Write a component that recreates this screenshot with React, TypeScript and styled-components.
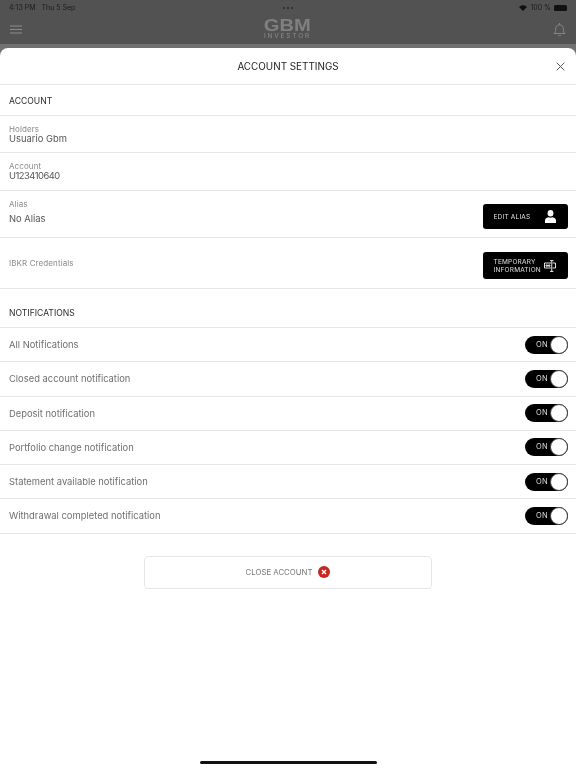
import React from 'react';
import styled, { createGlobalStyle } from 'styled-components';

const GlobalStyle = createGlobalStyle`
	html, body {
		margin: 0;
		padding: 0;
		background: #fff;
	}
	* {
		box-sizing: border-box;
	}
`;

const Page = styled.div`
	position: relative;
	width: 576px;
	height: 768px;
	overflow: hidden;
	background: #717171;
	font-family: Inter, "Liberation Sans", sans-serif;
	-webkit-font-smoothing: antialiased;
	display: flex;
	flex-direction: column;
`;

const TopArea = styled.div`
	height: 44px;
	flex: none;
	background: #525252;
	border-radius: 0.01px;
	will-change: transform;
	display: flex;
	flex-direction: column;
`;

const StatusBar = styled.div`
	height: 14px;
	padding: 1px 9px 0;
	display: grid;
	grid-template-columns: 1fr auto 1fr;
	align-items: center;
	font-size: 7px;
	color: #1c1c1c;
`;

const StatusLeft = styled.div`
	display: flex;
	gap: 6px;
`;

const Dots = styled.div`
	display: flex;
	gap: 2px;
`;

const Dot = styled.span`
	width: 2px;
	height: 2px;
	border-radius: 50%;
	background: #2a2a2a;
`;

const StatusRight = styled.div`
	display: flex;
	justify-content: flex-end;
	align-items: center;
	gap: 3px;
`;

const Battery = styled.span`
	width: 13px;
	height: 6px;
	border-radius: 1.5px;
	background: #111;
`;

const NavBar = styled.div`
	flex: 1;
	padding: 0 10px;
	display: flex;
	align-items: center;
	justify-content: space-between;
`;

const Logo = styled.div`
	display: flex;
	flex-direction: column;
	align-items: center;
	color: #808080;
`;

const LogoMain = styled.span`
	font-family: "Liberation Sans", sans-serif;
	font-size: 16.5px;
	line-height: 14px;
	font-weight: 700;
	transform: scaleX(1.22);
`;

const LogoSub = styled.span`
	font-size: 6.5px;
	line-height: 8px;
	letter-spacing: 1.85px;
	color: #8c8c8c;
`;

const Sheet = styled.div`
	margin-top: 4px;
	flex: 1;
	background: #fff;
	border-radius: 8px 8px 0 0;
	will-change: transform;
	display: flex;
	flex-direction: column;
`;

const TitleRow = styled.div`
	position: relative;
	height: 37px;
	flex: none;
	display: flex;
	align-items: center;
	justify-content: center;
	border-bottom: 1px solid #e6e6e6;
	font-size: 9.9px;
	color: #222;
`;

const CloseButton = styled.span`
	position: absolute;
	right: 11px;
	top: 14px;
	display: flex;
	color: #555;
`;

const SectionHeader = styled.div<{ $height: number; $offset: number }>`
	height: ${(props) => props.$height}px;
	flex: none;
	padding: ${(props) => props.$offset}px 9px 0;
	display: flex;
	align-items: center;
	border-bottom: 1px solid #e6e6e6;
	font-size: 8.6px;
	color: #2a2a2a;
`;

const InfoRow = styled.div<{ $height: number; $textLift?: number }>`
	height: ${(props) => props.$height}px;
	flex: none;
	padding: 0 8px ${(props) => props.$textLift || 0}px 9px;
	display: flex;
	align-items: center;
	justify-content: space-between;
	border-bottom: 1px solid #e6e6e6;
`;

const InfoText = styled.div<{ $gap?: number }>`
	display: flex;
	flex-direction: column;
	gap: ${(props) => props.$gap || 0}px;
`;

const InfoLabel = styled.span`
	font-size: 8px;
	line-height: 10px;
	color: #8a8a8a;
	letter-spacing: 0.1px;
`;

const InfoValue = styled.span<{ $digits?: boolean }>`
	font-size: 9.4px;
	line-height: 10px;
	color: #555;
	letter-spacing: ${(props) => (props.$digits ? -0.5 : 0)}px;
`;

const ActionButton = styled.div<{ $height: number; $top: number }>`
	width: 85px;
	height: ${(props) => props.$height}px;
	margin-top: ${(props) => props.$top}px;
	background: #000;
	border-radius: 3px;
	color: #e0e0e0;
	font-size: 6.5px;
	line-height: 8px;
	letter-spacing: 0.2px;
	padding: 0 12px 0 10.5px;
	display: flex;
	align-items: center;
	justify-content: space-between;
`;

const ToggleRow = styled.div`
	height: 34.25px;
	flex: none;
	padding: 0 8px 0 9px;
	display: flex;
	align-items: center;
	justify-content: space-between;
	border-bottom: 1px solid #e6e6e6;
	font-size: 9.4px;
	color: #6f6f6f;
`;

const Toggle = styled.div`
	position: relative;
	width: 43px;
	height: 18px;
	border-radius: 9px;
	background: #000;
	color: #ddd;
	font-size: 7.5px;
	line-height: 18px;
	padding-left: 11px;
	letter-spacing: 0.2px;
`;

const Knob = styled.span`
	position: absolute;
	right: 0;
	top: 0;
	width: 18px;
	height: 18px;
	border-radius: 50%;
	background: #fff;
	border: 1px solid #444;
`;

const CloseAccount = styled.div`
	align-self: center;
	margin-top: 22px;
	width: 288px;
	height: 33px;
	border: 1px solid #e6e6e6;
	border-radius: 4px;
	display: flex;
	align-items: center;
	justify-content: center;
	gap: 6px;
	font-size: 7.8px;
	color: #777;
`;

const HomeIndicator = styled.div`
	position: absolute;
	left: 200px;
	bottom: 4px;
	width: 177px;
	height: 3px;
	border-radius: 2px;
	background: #111;
`;

const Hamburger = () => (
	<svg width="12" height="9" viewBox="0 0 12 9" fill="none" stroke="#8c8c8c" strokeWidth="1.2">
		<path d="M0 1h12M0 4.5h12M0 8h12" />
	</svg>
);

const Bell = () => (
	<svg width="13" height="15" viewBox="0 0 13 15" fill="none" stroke="#8c8c8c" strokeWidth="0.9">
		<path d="M1 11.5c1.2-1 1.6-2 1.6-4.2 0-2.6 1.5-4.5 3.9-4.5s3.9 1.9 3.9 4.5c0 2.2.4 3.2 1.6 4.2z" />
		<path d="M6.5 2.8V1M5 13c.3.9 2.7.9 3 0" />
	</svg>
);

const Wifi = () => (
	<svg width="8" height="6" viewBox="0 0 8 6" fill="#111">
		<path d="M4 6 0 2c2.3-2.4 5.7-2.4 8 0z" />
	</svg>
);

const CloseIcon = () => (
	<svg width="9" height="9" viewBox="0 0 9 9" fill="none" stroke="currentColor" strokeWidth="1">
		<path d="M.7.7l7.6 7.6M8.3.7 .7 8.3" />
	</svg>
);

const UserIcon = () => (
	<svg width="11" height="13" viewBox="0 0 11 13" fill="#fff">
		<ellipse cx="5.5" cy="3.3" rx="2.9" ry="3.3" />
		<path d="M0 13v-2.5C0 8.6 1.6 7.5 3.3 7.2c1.3.6 3.1.6 4.4 0C9.4 7.5 11 8.6 11 10.5V13z" />
	</svg>
);

const TemporaryIcon = () => (
	<svg width="12" height="12" viewBox="0 0 12 12" fill="none" stroke="#fff" strokeWidth="0.9">
		<path d="M7 3H.5v5H7M8.5 3h3v5h-3M6 .6h3.5M6 11.4h3.500M7.75.6v10.800" />
		<path d="M2 5h1.5v1.2H2zM4.5 5H6v1.2H4.500z" />
	</svg>
);

const RedCross = () => (
	<svg width="12" height="12" viewBox="0 0 12 12">
		<circle cx="6" cy="6" r="6" fill="#c4281f" />
		<path d="M4 4l4 4M8 4l-4 4" stroke="#fff" strokeWidth="1.3" fill="none" />
	</svg>
);

const notifications = [
	'All Notifications',
	'Closed account notification',
	'Deposit notification',
	'Portfolio change notification',
	'Statement available notification',
	'Withdrawal completed notification'
];

const App = () => {
	return (
		<Page>
			<GlobalStyle />
			<TopArea>
				<StatusBar>
					<StatusLeft>
						<span>4:13 PM</span>
						<span>Thu 5 Sep</span>
					</StatusLeft>
					<Dots>
						<Dot />
						<Dot />
						<Dot />
					</Dots>
					<StatusRight>
						<Wifi />
						<span>100 %</span>
						<Battery />
					</StatusRight>
				</StatusBar>
				<NavBar>
					<Hamburger />
					<Logo>
						<LogoMain>GBM</LogoMain>
						<LogoSub>INVESTOR</LogoSub>
					</Logo>
					<Bell />
				</NavBar>
			</TopArea>
			<Sheet>
				<TitleRow>
					ACCOUNT SETTINGS
					<CloseButton>
						<CloseIcon />
					</CloseButton>
				</TitleRow>
				<SectionHeader $height={31} $offset={2}>ACCOUNT</SectionHeader>
				<InfoRow $height={37}>
					<InfoText>
						<InfoLabel>Holders</InfoLabel>
						<InfoValue>Usuario Gbm</InfoValue>
					</InfoText>
				</InfoRow>
				<InfoRow $height={38} $textLift={2}>
					<InfoText>
						<InfoLabel>Account</InfoLabel>
						<InfoValue $digits>U123410640</InfoValue>
					</InfoText>
				</InfoRow>
				<InfoRow $height={47} $textLift={6}>
					<InfoText $gap={5}>
						<InfoLabel>Alias</InfoLabel>
						<InfoValue>No Alias</InfoValue>
					</InfoText>
					<ActionButton $height={25} $top={11}>
						EDIT ALIAS
						<UserIcon />
					</ActionButton>
				</InfoRow>
				<InfoRow $height={51}>
					<InfoLabel>IBKR Credentials</InfoLabel>
					<ActionButton $height={27} $top={5}>
						<span>
							TEMPORARY
							<br />
							INFORMATION
						</span>
						<TemporaryIcon />
					</ActionButton>
				</InfoRow>
				<SectionHeader $height={39} $offset={10}>NOTIFICATIONS</SectionHeader>
				{notifications.map((item) => (
					<ToggleRow key={item}>
						{item}
						<Toggle>
							ON
							<Knob />
						</Toggle>
					</ToggleRow>
				))}
				<CloseAccount>
					CLOSE ACCOUNT
					<RedCross />
				</CloseAccount>
			</Sheet>
			<HomeIndicator />
		</Page>
	);
};

export default App;
